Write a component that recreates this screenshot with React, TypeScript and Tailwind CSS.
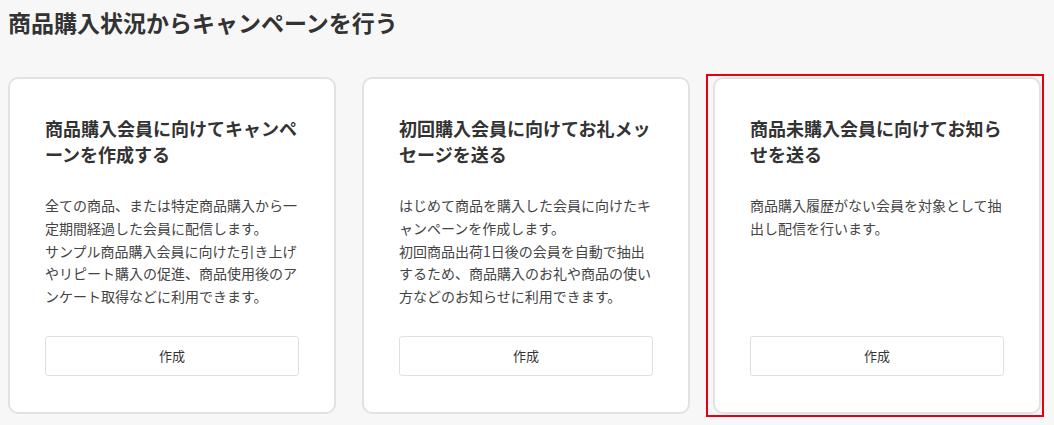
import React from 'react';

interface CampaignCardProps {
    title: string;
    paragraphs: string[];
    selected?: boolean;
}

const cards: CampaignCardProps[] = [
    {
        title: '商品購入会員に向けてキャンペーンを作成する',
        paragraphs: [
            '全ての商品、または特定商品購入から一定期間経過した会員に配信します。',
            'サンプル商品購入会員に向けた引き上げやリピート購入の促進、商品使用後のアンケート取得などに利用できます。',
        ],
    },
    {
        title: '初回購入会員に向けてお礼メッセージを送る',
        paragraphs: [
            'はじめて商品を購入した会員に向けたキャンペーンを作成します。',
            '初回商品出荷1日後の会員を自動で抽出するため、商品購入のお礼や商品の使い方などのお知らせに利用できます。',
        ],
    },
    {
        title: '商品未購入会員に向けてお知らせを送る',
        paragraphs: ['商品購入履歴がない会員を対象として抽出し配信を行います。'],
        selected: true,
    },
];

function CampaignCard({ title, paragraphs, selected }: CampaignCardProps) {
    return (
        <div
            className={`relative w-[328px] flex flex-col bg-white border-2 border-[#e2e2e2] rounded-[10px] px-[35px] pt-[36px] pb-[36px]
                ${selected ? '-ml-[3px]' : ''}`}
        >
            {/* selection frame */}
            {selected && (
                <div className="absolute -left-[9px] -right-[5px] -top-[5px] -bottom-[5px] border-2 border-[#e60012] pointer-events-none" />
            )}

            <h2 className="text-[18px] leading-[26px] font-bold text-[#333]">{title}</h2>

            <div className="mt-[27px] mb-[28px] text-[14px] leading-[22.8px] text-[#444]">
                {paragraphs.map(p => (
                    <p key={p}>{p}</p>
                ))}
            </div>

            <button className="mt-auto h-[40px] w-full rounded-[3px] border border-[#e0e0e0] bg-white text-[13px] text-[#333]">
                作成
            </button>
        </div>
    );
}

export default function App() {
    return (
        <div
            className="min-h-[425px] bg-[#f7f7f7] pl-[8px] pt-[6px]"
            style={{ fontFamily: '"Noto Sans CJK JP", "Noto Sans", sans-serif' }}
        >
            <h1 className="text-[23px] leading-[32px] font-bold text-[#333]">
                商品購入状況からキャンペーンを行う
            </h1>

            <div className="mt-[39px] flex items-stretch gap-[26px]">
                {cards.map(card => (
                    <CampaignCard key={card.title} {...card} />
                ))}
            </div>
        </div>
    );
}
